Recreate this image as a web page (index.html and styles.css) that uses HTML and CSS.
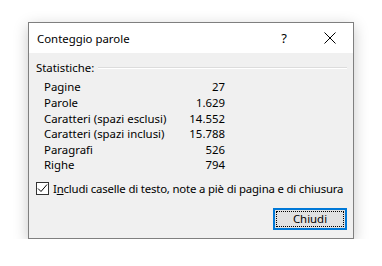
FILE: index.html
```html
<!DOCTYPE html>
<html lang="it">

<head>
  <meta charset="UTF-8">
  <title>Conteggio parole</title>
  <link rel="stylesheet" href="styles.css">
</head>

<body>
  <div class="dialog">
    <div class="titlebar">
      <span class="title">Conteggio parole</span>
      <span class="help">?</span>
      <span class="close">
        <svg width="12" height="12" viewBox="0 0 12 12">
          <path d="M0.5 0.5 L11.5 11.5 M11.5 0.5 L0.5 11.5" stroke="#000" stroke-width="1" fill="none" />
        </svg>
      </span>
    </div>
    <div class="content">
      <div class="group-head">
        <span>Statistiche:</span>
        <span class="rule"></span>
      </div>
      <div class="stats">
        <span>Pagine</span><span class="num">27</span>
        <span>Parole</span><span class="num">1.629</span>
        <span>Caratteri (spazi esclusi)</span><span class="num">14.552</span>
        <span>Caratteri (spazi inclusi)</span><span class="num">15.788</span>
        <span>Paragrafi</span><span class="num">526</span>
        <span>Righe</span><span class="num">794</span>
      </div>
      <label class="check">
        <span class="box">
          <svg width="11" height="11" viewBox="0 0 11 11">
            <path d="M1 5.5 L4 8.5 L10 1.5" stroke="#000" stroke-width="1" fill="none" />
          </svg>
        </span>
        <span class="check-text">I<u>n</u>cludi caselle di testo, note a piè di pagina e di chiusura</span>
      </label>
      <div class="actions">
        <button class="btn"><span class="focus">Chiudi</span></button>
      </div>
    </div>
  </div>
</body>

</html>
```

FILE: styles.css
```css
body {
  margin: 0;
  background-color: #fff;
  font-family: 'Noto Sans', sans-serif;
  font-size: 11.4px;
  color: #000;
}

.dialog {
  box-sizing: border-box;
  width: 326px;
  height: 217px;
  margin: 22px 0 0 28px;
  border: 1px solid #7f7f7f;
  background-color: #f0f0f0;
  box-shadow: 0 4px 14px rgba(0, 0, 0, 0.22);
  display: flex;
  flex-direction: column;
}

.titlebar {
  height: 30px;
  background-color: #fff;
  display: flex;
  align-items: center;
  padding-left: 8px;
}

.title {
  flex: 1;
}

.help {
  width: 46px;
  text-align: center;
  font-size: 13px;
}

.close {
  width: 46px;
  display: flex;
  justify-content: center;
}

.content {
  flex: 1;
  padding: 6px 6px 0 7px;
  display: flex;
  flex-direction: column;
}

.group-head {
  display: flex;
  align-items: center;
  height: 16px;
}

.rule {
  flex: 1;
  height: 0;
  border-top: 1px solid #dcdcdc;
  border-bottom: 1px solid #fff;
  margin: 1px 0 0 4px;
}

.stats {
  display: grid;
  grid-template-columns: 1fr auto;
  grid-auto-rows: 15.6px;
  align-items: center;
  width: 181px;
  margin: 4.2px 0 0 8px;
}

.num {
  text-align: right;
}

.check {
  display: flex;
  align-items: center;
  margin-top: 8.7px;
  height: 15px;
}

.box {
  box-sizing: border-box;
  width: 13px;
  height: 13px;
  border: 1px solid #333;
  background-color: #fff;
  display: flex;
  align-items: center;
  justify-content: center;
  margin-right: 4px;
}

.check-text {
  white-space: nowrap;
  letter-spacing: -0.18px;
}

.actions {
  display: flex;
  justify-content: flex-end;
  margin-top: 11.5px;
}

.btn {
  box-sizing: border-box;
  width: 74px;
  height: 22px;
  border: 2px solid #0078d7;
  background-color: #e1e1e1;
  padding: 1px;
  font-family: inherit;
  font-size: 11.4px;
  display: flex;
}

.focus {
  flex: 1;
  border: 1px dotted #000;
  display: flex;
  align-items: center;
  justify-content: center;
}
```
